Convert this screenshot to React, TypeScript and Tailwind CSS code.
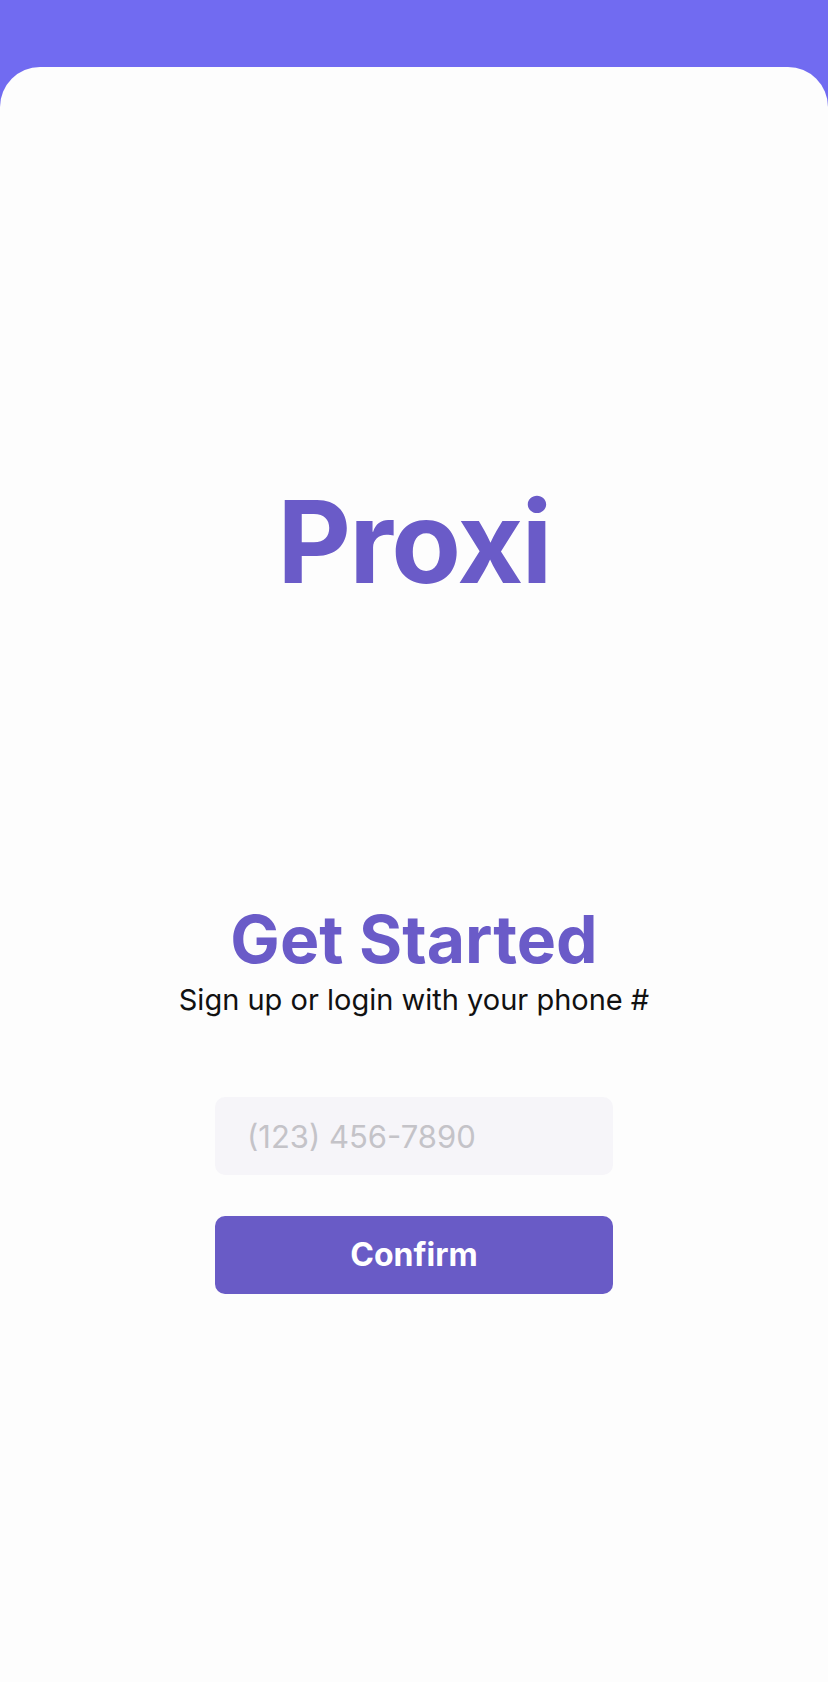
export default function App() {
  return (
    <div className="min-h-[1682px] bg-[#716bf1] pt-[67px] font-['Inter',sans-serif]">
      <div className="flex min-h-[1615px] flex-col items-center rounded-t-[40px] bg-[#fdfdfd] pt-[418px]">
        <h1 className="text-[114px] leading-none font-bold tracking-[-0.015em] text-[#6a5bc8]">Proxi</h1>

        <h2 className="mt-[307px] text-[66px] leading-none font-bold text-[#6a5bc8]">Get Started</h2>
        <p className="mt-[13px] text-[29px] leading-none text-[#111]">Sign up or login with your phone #</p>

        <input
          type="tel"
          placeholder="(123) 456-7890"
          className="mt-[83px] h-[78px] w-[398px] rounded-[10px] bg-[#f6f5f9] px-[32px] text-[31px] text-[#333] outline-none placeholder:text-[#c4c3c8]"
        />

        <button className="mt-[41px] h-[78px] w-[398px] rounded-[10px] bg-[#695bc6] text-[32px] font-bold text-white">
          Confirm
        </button>
      </div>
    </div>
  );
}
